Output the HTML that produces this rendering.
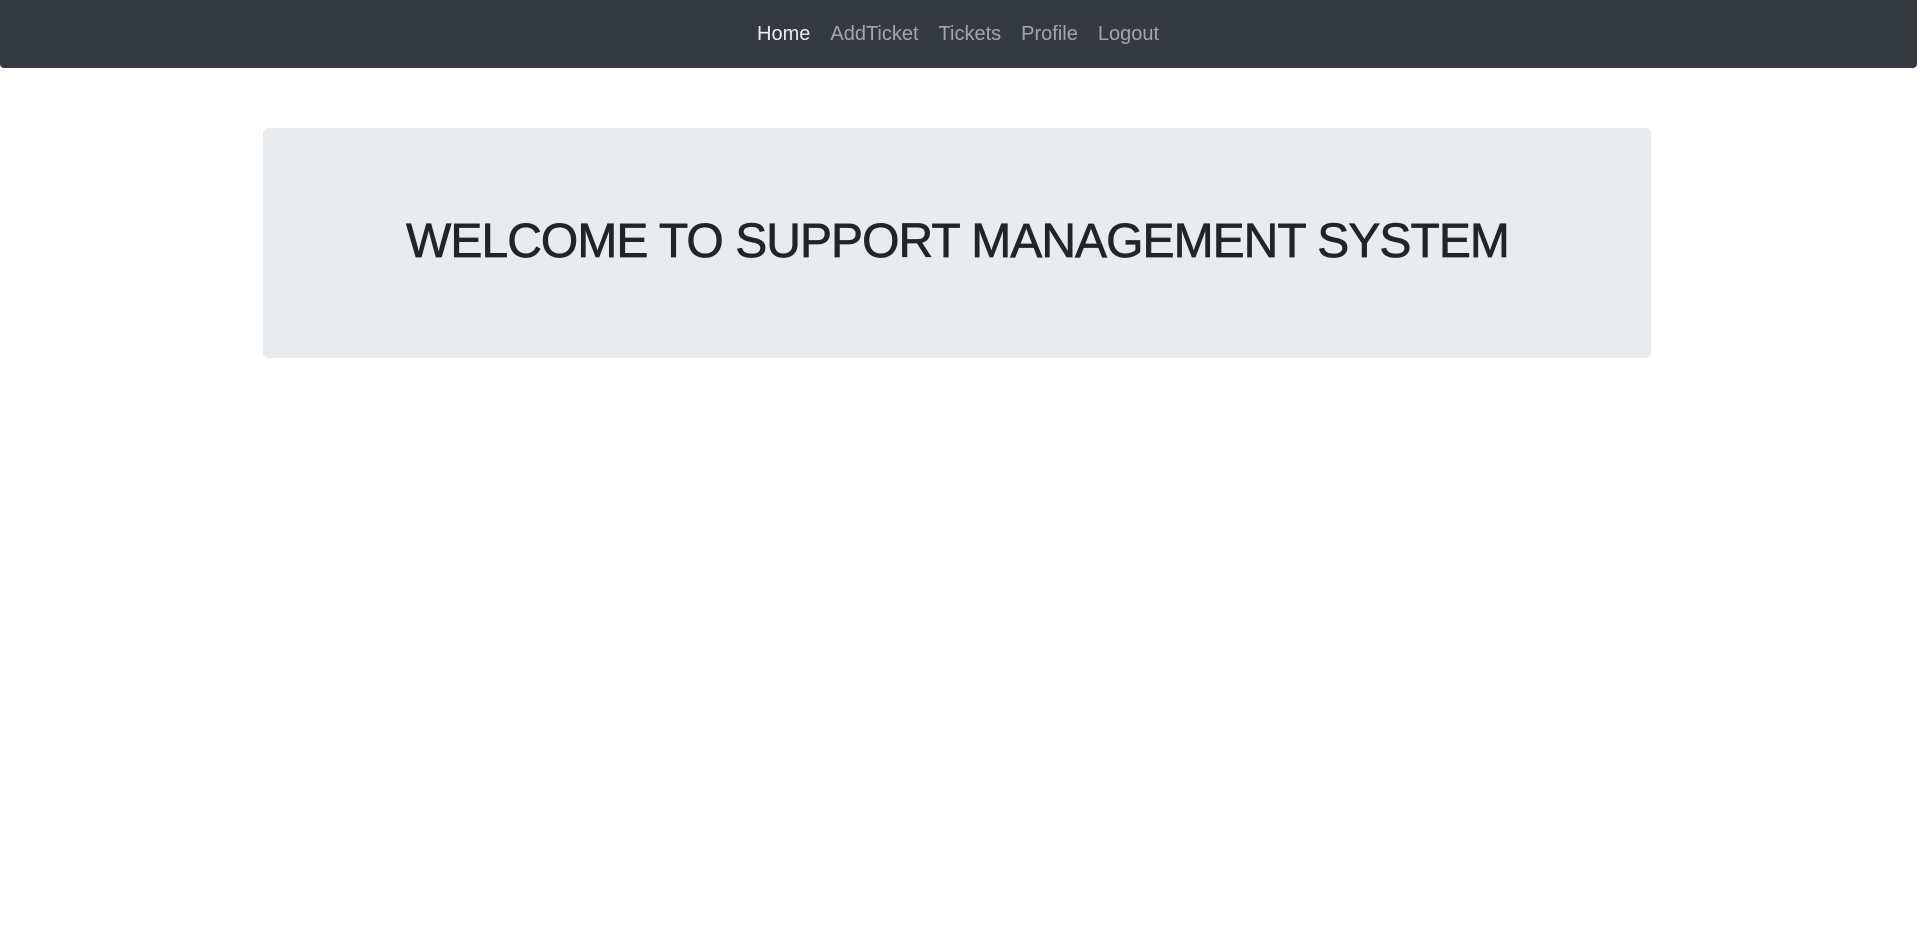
<!DOCTYPE html>
<html><head><style>
body{margin:0;background:#fff;font-family:"Liberation Sans",sans-serif;width:1917px;height:937px;overflow:hidden;position:relative}
.nav{position:absolute;left:0;top:0;width:1917px;height:68px;background:#343a40;border-radius:0 0 4px 4px}
.links{position:absolute;left:757px;top:23px;font-size:20px;white-space:nowrap;color:rgba(255,255,255,.55)}
.links span{margin-right:20px}
.links span.a{color:rgba(255,255,255,.9)}
.jumbo{position:absolute;left:263px;top:128px;width:1388px;height:230px;background:#e9ecef;border-radius:5px}
h1{position:absolute;width:100%;top:214px;margin:0;text-align:center;font-weight:normal;font-size:48px;line-height:56px;color:#212529;letter-spacing:-0.95px;-webkit-text-stroke:0.7px #212529}
</style></head><body>
<div class="nav"><div class="links"><span class="a">Home</span><span>AddTicket</span><span>Tickets</span><span>Profile</span><span>Logout</span></div></div>
<div class="jumbo"></div>
<h1 style="left:-1px">WELCOME TO SUPPORT MANAGEMENT SYSTEM</h1>
</body></html>
